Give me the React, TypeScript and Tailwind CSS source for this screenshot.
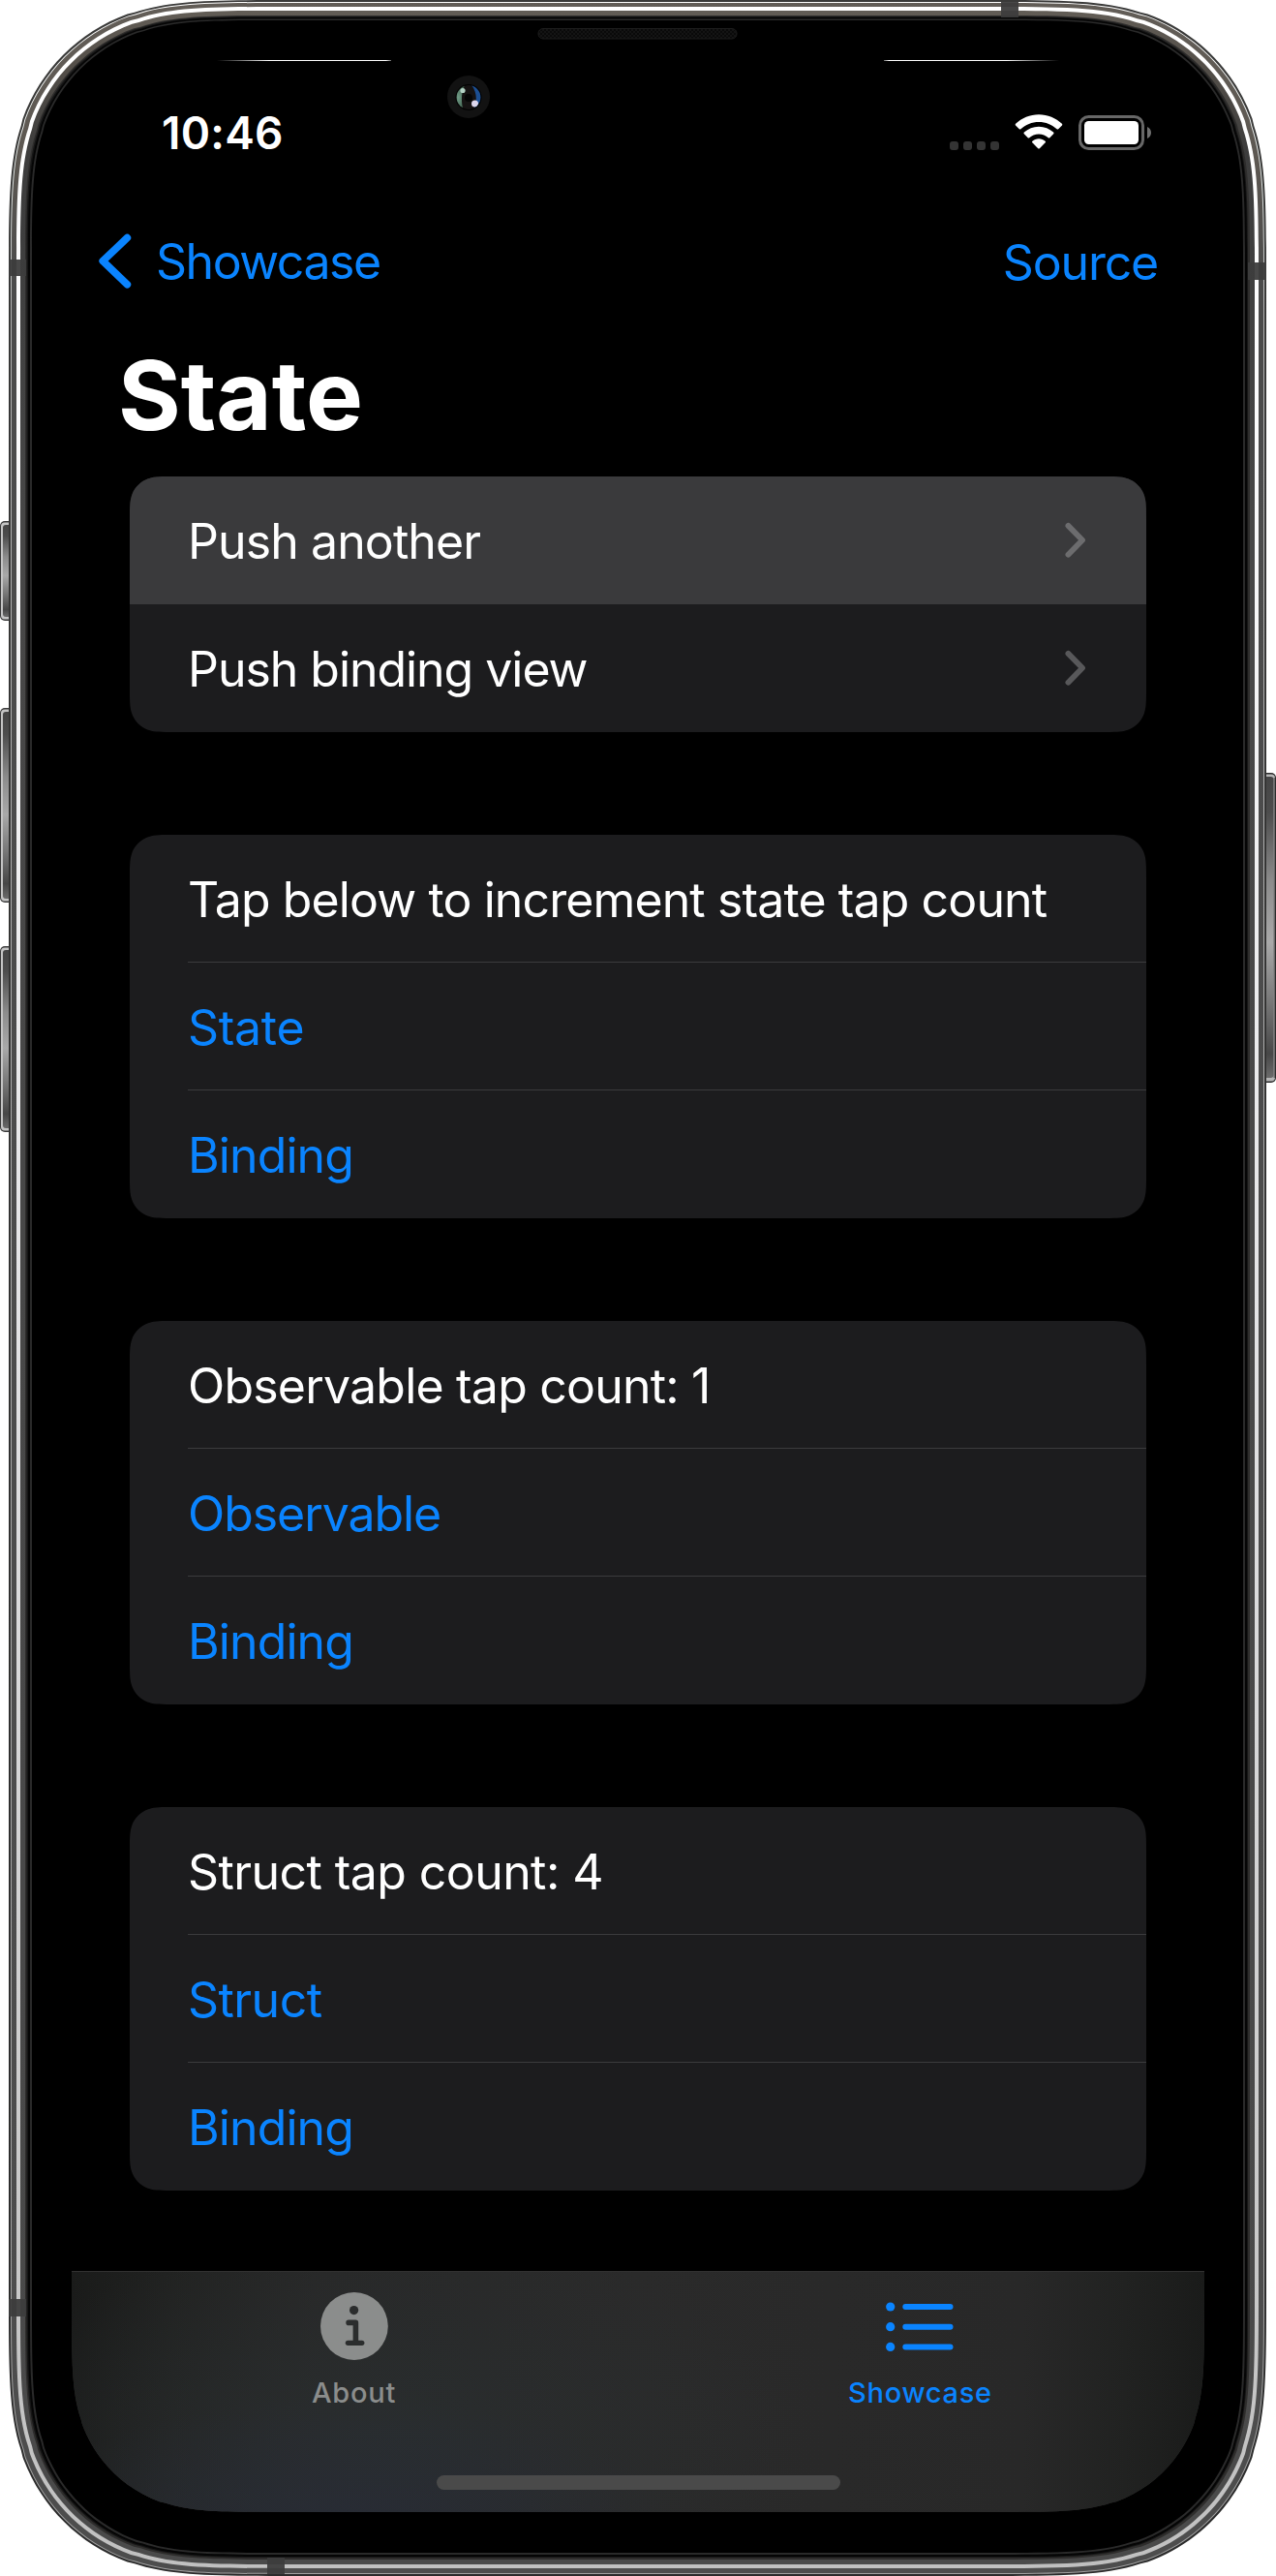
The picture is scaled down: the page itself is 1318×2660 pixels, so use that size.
import type { ReactNode } from "react";

/** Rounded rectangle with continuous-curvature corners, as an SVG path. */
function squircle(l: number, t: number, r: number, b: number, radius: number): string {
  const k = (f: number) => +(f * radius).toFixed(2);
  const a = k(1.52866);
  const c1 = k(1.08849);
  const c2 = k(0.86841);
  const p = k(0.66993);
  const q = k(0.06549);
  const u = k(0.63149);
  const v = k(0.07491);
  const m = k(0.37282);
  const n = k(0.16906);
  return [
    `M${l + a} ${t} L${r - a} ${t}`,
    `C${r - c1} ${t} ${r - c2} ${t} ${r - p} ${t + q} L${r - u} ${t + v}`,
    `C${r - m} ${t + n} ${r - n} ${t + m} ${r - v} ${t + u} L${r - q} ${t + p}`,
    `C${r} ${t + c2} ${r} ${t + c1} ${r} ${t + a} L${r} ${b - a}`,
    `C${r} ${b - c1} ${r} ${b - c2} ${r - q} ${b - p} L${r - v} ${b - u}`,
    `C${r - n} ${b - m} ${r - m} ${b - n} ${r - u} ${b - v} L${r - p} ${b - q}`,
    `C${r - c2} ${b} ${r - c1} ${b} ${r - a} ${b} L${l + a} ${b}`,
    `C${l + c1} ${b} ${l + c2} ${b} ${l + p} ${b - q} L${l + u} ${b - v}`,
    `C${l + m} ${b - n} ${l + n} ${b - m} ${l + v} ${b - u} L${l + q} ${b - p}`,
    `C${l} ${b - c2} ${l} ${b - c1} ${l} ${b - a} L${l} ${t + a}`,
    `C${l} ${t + c1} ${l} ${t + c2} ${l + q} ${t + p} L${l + v} ${t + u}`,
    `C${l + n} ${t + m} ${l + m} ${t + n} ${l + u} ${t + v} L${l + p} ${t + q}`,
    `C${l + c2} ${t} ${l + c1} ${t} ${l + a} ${t} Z`,
  ].join(" ");
}

function SideButton({ y, h, right = false }: { y: number; h: number; right?: boolean }) {
  return right ? (
    <g>
      <rect x="1300" y={y} width="18" height={h} rx="5" fill="#2b2b2b" />
      <rect x="1300" y={y + 1.5} width="17" height={h - 3} rx="4" fill="#b5b5b5" />
      <rect x="1300" y={y + 4} width="15.5" height={h - 9} rx="3" fill="url(#button)" />
      <rect x="1315.5" y={y + 5} width="1.5" height={h - 10} fill="#6a6a6a" />
    </g>
  ) : (
    <g>
      <rect x="0" y={y} width="18" height={h} rx="5" fill="#3a3a3a" />
      <rect x="1" y={y + 1.5} width="17" height={h - 3} rx="4" fill="#c4c4c4" />
      <rect x="3" y={y + 4} width="15" height={h - 8} rx="3" fill="url(#button)" />
    </g>
  );
}

function Bezel() {
  return (
    <svg className="absolute inset-0" width="1318" height="2660" viewBox="0 0 1318 2660" aria-hidden="true">
      <defs>
        <linearGradient id="edge" gradientUnits="userSpaceOnUse" x1="0" y1="0" x2="0" y2="2660">
          <stop offset="0" stopColor="#3a3a39" />
          <stop offset="1" stopColor="#2b2b2b" />
        </linearGradient>
        <linearGradient id="rim" gradientUnits="userSpaceOnUse" x1="0" y1="0" x2="0" y2="2660">
          <stop offset="0" stopColor="#ffffff" />
          <stop offset="0.07" stopColor="#e0e6e4" />
          <stop offset="0.12" stopColor="#b4b4b4" />
          <stop offset="1" stopColor="#a0a0a0" />
        </linearGradient>
        <linearGradient id="steel" gradientUnits="userSpaceOnUse" x1="0" y1="0" x2="0" y2="2660">
          <stop offset="0" stopColor="#625d57" />
          <stop offset="0.06" stopColor="#5d5852" />
          <stop offset="0.11" stopColor="#4b4b4b" />
          <stop offset="1" stopColor="#4d4d4d" />
        </linearGradient>
        <linearGradient id="inner" gradientUnits="userSpaceOnUse" x1="0" y1="0" x2="0" y2="2660">
          <stop offset="0" stopColor="#645f58" />
          <stop offset="0.025" stopColor="#544f49" />
          <stop offset="0.06" stopColor="#3c3c3c" />
          <stop offset="0.2" stopColor="#474747" />
          <stop offset="1" stopColor="#4a4a4a" />
        </linearGradient>
        <linearGradient id="gleam" gradientUnits="userSpaceOnUse" x1="0" y1="0" x2="0" y2="2660">
          <stop offset="0" stopColor="#ffffff" />
          <stop offset="0.16" stopColor="#fbfbfc" />
          <stop offset="0.5" stopColor="#e4e4e6" />
          <stop offset="0.85" stopColor="#cacaca" />
          <stop offset="1" stopColor="#c0c0c0" />
        </linearGradient>
        <linearGradient id="button" x1="0" y1="0" x2="0" y2="1">
          <stop offset="0" stopColor="#454545" />
          <stop offset="0.12" stopColor="#4d4d4d" />
          <stop offset="0.35" stopColor="#8c8c8c" />
          <stop offset="0.55" stopColor="#a9a9a9" />
          <stop offset="0.75" stopColor="#777777" />
          <stop offset="0.92" stopColor="#474747" />
          <stop offset="1" stopColor="#6b6b6b" />
        </linearGradient>
        <linearGradient id="glintLeft" x1="0" x2="1" y1="0" y2="0">
          <stop offset="0" stopColor="#fff" stopOpacity="0" />
          <stop offset="0.3" stopColor="#fff" />
          <stop offset="0.97" stopColor="#fff" />
          <stop offset="1" stopColor="#fff" stopOpacity="0.4" />
        </linearGradient>
        <linearGradient id="glintRight" x1="1" x2="0" y1="0" y2="0">
          <stop offset="0" stopColor="#fff" stopOpacity="0" />
          <stop offset="0.3" stopColor="#fff" />
          <stop offset="0.97" stopColor="#fff" />
          <stop offset="1" stopColor="#fff" stopOpacity="0.4" />
        </linearGradient>
        <pattern id="mesh" width="4" height="4" patternUnits="userSpaceOnUse">
          <rect width="4" height="4" fill="#141414" />
          <rect width="2" height="2" fill="#0a0a0a" />
          <rect x="2" y="2" width="2" height="2" fill="#0a0a0a" />
        </pattern>
        <radialGradient id="lensGreen">
          <stop offset="0" stopColor="#6f9a85" />
          <stop offset="1" stopColor="#3f5f4d" />
        </radialGradient>
        <clipPath id="lens">
          <circle cx="484" cy="100.5" r="12.4" />
        </clipPath>
      </defs>

      <SideButton y={538} h={103} />
      <SideButton y={731} h={201} />
      <SideButton y={977} h={192} />
      <SideButton y={798} h={320} right />

      <path d={squircle(9, 0, 1308, 2660, 194)} fill="url(#edge)" />
      <path d={squircle(11, 2, 1306, 2658, 192)} fill="url(#rim)" />
      <path d={squircle(12, 3, 1305, 2657, 191)} fill="url(#steel)" />
      <path d={squircle(17, 7, 1300, 2652, 187)} fill="url(#gleam)" />
      <path d={squircle(21, 11, 1296, 2648, 183)} fill="url(#inner)" />
      <path d={squircle(26, 16, 1291, 2643, 178)} fill="#2e2d2c" />
      <path d={squircle(27.5, 17, 1289, 2641, 177)} fill="#161616" />
      <path d={squircle(29, 18, 1288, 2640, 176)} fill="#050505" />
      <path d={squircle(31, 19.5, 1286, 2638, 174)} fill="#2a2a2a" />
      <path d={squircle(33, 21, 1284, 2636, 172)} fill="#000" />

      <g fill="#3d3d3d" fillOpacity="0.94">
        <rect x="9" y="268" width="18" height="17" />
        <rect x="9" y="2374" width="18" height="18" />
        <rect x="1289" y="271" width="19" height="18" />
        <rect x="1034" y="2" width="18" height="16" />
        <rect x="276" y="2641" width="18" height="17" />
      </g>

      <rect x="224" y="62" width="180" height="1" fill="url(#glintLeft)" />
      <rect x="913" y="62" width="181" height="1" fill="url(#glintRight)" />

      <rect x="556" y="29.5" width="205" height="10.5" rx="5" fill="url(#mesh)" stroke="#1d1d1d" />
      <circle cx="484" cy="100" r="22" fill="#121212" />
      <circle cx="484" cy="100.5" r="13.5" fill="#020202" />
      <g clipPath="url(#lens)">
        <circle cx="484" cy="100.5" r="12.6" fill="#151212" />
        <path d="M481 86 C476 95 476 106 479 115 L466 115 L466 86 Z" fill="url(#lensGreen)" />
        <path d="M487 88 C493 95 493 105 489 114 L500 114 L500 86 Z" fill="#1c4f93" />
        <circle cx="484" cy="101" r="4" fill="#050505" />
        <circle cx="478" cy="93.5" r="2.6" fill="#b4d2c4" />
        <circle cx="490.5" cy="107" r="3.5" fill="#dcd6ec" />
      </g>
    </svg>
  );
}

function StatusBar() {
  return (
    <div className="flex h-[90px] items-center pl-[93px] pr-[55px] text-white">
      <span className="text-[46px] font-semibold leading-[56px] tracking-[0.23px]">10:46</span>
      <div className="ml-auto flex h-[37px] items-center">
        <div className="flex gap-[5px] self-end pb-px">
          <i className="size-[9px] rounded-[3px] bg-[#343434]" />
          <i className="size-[9px] rounded-[3px] bg-[#343434]" />
          <i className="size-[9px] rounded-[3px] bg-[#343434]" />
          <i className="size-[9px] rounded-[3px] bg-[#343434]" />
        </div>
        <svg className="ml-4 mb-0.5" width="50" height="36" viewBox="0 0 50 36" fill="#fff">
          <path d="M25 0.3 C34.2 0.3 42.6 3.9 48.9 9.8 C49.4 10.3 49.4 11 49 11.5 L45.2 15.3 C44.8 15.7 44.1 15.7 43.6 15.3 C38.7 10.7 32.1 8 25 8 C17.9 8 11.3 10.7 6.4 15.3 C5.9 15.7 5.2 15.7 4.8 15.3 L1 11.5 C0.6 11 0.6 10.3 1.1 9.8 C7.4 3.9 15.8 0.3 25 0.3 Z" />
          <path d="M25 12.8 C30.8 12.8 36.1 15 40.1 18.6 C40.7 19.1 40.7 19.8 40.2 20.3 L36.3 24.2 C35.9 24.6 35.3 24.6 34.8 24.2 C32.2 21.9 28.8 20.5 25 20.5 C21.2 20.5 17.8 21.9 15.2 24.2 C14.7 24.6 14.1 24.6 13.7 24.2 L9.8 20.3 C9.3 19.8 9.3 19.1 9.9 18.6 C13.9 15 19.2 12.8 25 12.8 Z" />
          <path d="M25 25.3 C27.5 25.3 29.8 26.2 31.6 27.7 C32.2 28.2 32.2 28.8 31.7 29.3 L25.8 35.2 C25.3 35.7 24.7 35.7 24.2 35.2 L18.3 29.3 C17.8 28.8 17.8 28.2 18.4 27.7 C20.2 26.2 22.5 25.3 25 25.3 Z" />
        </svg>
        <svg className="ml-4" width="75" height="36" viewBox="0 0 75 36">
          <rect x="1.5" y="1.5" width="65" height="33" rx="9" fill="none" stroke="#676767" strokeWidth="3" />
          <rect x="6" y="6" width="56" height="24" rx="4.5" fill="#fff" />
          <path d="M71 12 C73.4 13 75 15.3 75 18 C75 20.7 73.4 23 71 24 Z" fill="#6f6f6f" />
        </svg>
      </div>
    </div>
  );
}

function NavBar() {
  return (
    <div className="mt-[22px] flex h-[132px] items-center pl-7 pr-12 text-[50px] leading-[60px] text-[#0a84ff]">
      <svg width="34" height="58" viewBox="0 0 34 58" fill="none" stroke="currentColor" strokeWidth="7.6" strokeLinecap="round" strokeLinejoin="round">
        <path d="M29.4 4.6 L4.2 28.6 L29.4 52.8" />
      </svg>
      <span className="ml-[25px] tracking-[-1.47px]">Showcase</span>
      <span className="ml-auto pt-0.5 tracking-[-1.2px]">Source</span>
    </div>
  );
}

function Chevron({ pressed = false }: { pressed?: boolean }) {
  return (
    <svg className={pressed ? "text-[#6c6c6e]" : "text-[#58585a]"} width="22" height="38" viewBox="0 0 22 38" fill="none" stroke="currentColor" strokeWidth="5.8" strokeLinecap="round" strokeLinejoin="round">
      <path d="M3.4 3.9 L18 18.8 L3.4 33.7" />
    </svg>
  );
}

function Card({ rows, children }: { rows: number; children: ReactNode }) {
  return (
    <div
      className="flex flex-col bg-[#1c1c1e]"
      style={{ clipPath: `path("${squircle(0, 0, 1050, rows * 132, 30)}")` }}
    >
      {children}
    </div>
  );
}

type RowProps = { children: ReactNode; tracking: string; link?: boolean; last?: boolean };

function Row({ children, tracking, link = false, last = false }: RowProps) {
  return (
    <div className="flex h-[132px] pl-[60px] text-[50px] leading-[60px]">
      <div
        className={`flex flex-1 items-center pt-[3px] ${last ? "pb-px" : "border-b border-[#3b3b3d]"} ${link ? "text-[#0a84ff]" : "text-white"}`}
      >
        <span className={tracking}>{children}</span>
      </div>
    </div>
  );
}

function PushRow({ children, tracking, pressed = false }: { children: ReactNode; tracking: string; pressed?: boolean }) {
  return (
    <div
      className={`flex h-[132px] items-center justify-between pl-[60px] pr-[62px] text-[50px] leading-[60px] text-white ${pressed ? "bg-[#3a3a3c]" : ""}`}
    >
      <span className={`pt-0.5 ${tracking}`}>{children}</span>
      <Chevron pressed={pressed} />
    </div>
  );
}

function InfoIcon() {
  return (
    <svg className="-ml-0.5" width="70" height="70" viewBox="0 0 70 70" fill="none">
      <circle cx="34.9" cy="35" r="34.9" fill="#8b8d8c" />
      <circle cx="34.6" cy="18.6" r="4.6" fill="#2b2d2d" />
      <path d="M29.1 31.4 H36.4 V52.3" stroke="#2b2d2d" strokeWidth="5.6" strokeLinecap="round" strokeLinejoin="round" />
      <path d="M28.4 52.3 H42.8" stroke="#2b2d2d" strokeWidth="5.2" strokeLinecap="round" />
    </svg>
  );
}

function ListIcon() {
  return (
    <svg className="-ml-[3px]" width="70" height="70" viewBox="0 0 70 70" fill="#0a84ff">
      <circle cx="4.7" cy="15" r="4.6" />
      <circle cx="4.7" cy="35.7" r="4.6" />
      <circle cx="4.7" cy="56.4" r="4.6" />
      <rect x="17.3" y="12" width="52.2" height="6" rx="3" />
      <rect x="17.3" y="32.7" width="52.2" height="6" rx="3" />
      <rect x="17.3" y="53.4" width="52.2" height="6" rx="3" />
    </svg>
  );
}

function TabBar() {
  return (
    <div
      className="mt-[83px] flex h-[249px] flex-col border-t border-[#313131] bg-[#282828] bg-[radial-gradient(ellipse_340px_130px_at_24%_105%,#282c35_0%,#282c3500_100%),radial-gradient(ellipse_420px_220px_at_28%_70%,#292d2e_0%,#292d2e00_100%),linear-gradient(to_right,#1a1b1a_0%,#212221_9%,#282828_22%,#2a2a2a_50%,#282828_84%,#212221_93%,#1a1b1a_100%)]"
      style={{ clipPath: `path("${squircle(0, -400, 1170, 249, 144)}")` }}
    >
      <div className="flex text-[29px] font-medium leading-[35px]">
        <div className="flex flex-1 flex-col items-center pt-[21px] text-[#8b8d8c]">
          <InfoIcon />
          <span className="mt-4 -ml-0.5 tracking-[0.75px]">About</span>
        </div>
        <div className="flex flex-1 flex-col items-center pt-[21px] text-[#0a84ff]">
          <ListIcon />
          <span className="mt-4 -ml-0.5 tracking-[0.73px]">Showcase</span>
        </div>
      </div>
      <div className="mx-auto mt-auto mb-[23px] h-[15px] w-[417px] rounded-full bg-[#4a4a4a]" />
    </div>
  );
}

export default function App() {
  return (
    <div className="relative h-[2660px] w-[1318px] overflow-hidden bg-white font-[Inter,sans-serif]">
      <Bezel />
      <main className="relative mx-[74px] flex flex-col pt-[92px]">
        <StatusBar />
        <NavBar />
        <h1 className="flex h-[144px] items-center pl-12 text-[99px] font-bold leading-[120px] tracking-[-0.1px] text-white">State</h1>

        <div className="mt-3 flex flex-col gap-[106px] px-[60px]">
          <Card rows={2}>
            <PushRow pressed tracking="tracking-[-0.9px]">Push another</PushRow>
            <PushRow tracking="tracking-[-1.04px]">Push binding view</PushRow>
          </Card>
          <Card rows={3}>
            <Row tracking="tracking-[-0.89px]">Tap below to increment state tap count</Row>
            <Row link tracking="tracking-[-0.3px]">State</Row>
            <Row link last tracking="tracking-[-0.9px]">Binding</Row>
          </Card>
          <Card rows={3}>
            <Row tracking="tracking-[-0.8px]">Observable tap count: 1</Row>
            <Row link tracking="tracking-[-1.06px]">Observable</Row>
            <Row link last tracking="tracking-[-0.9px]">Binding</Row>
          </Card>
          <Card rows={3}>
            <Row tracking="tracking-[-0.58px]">Struct tap count: 4</Row>
            <Row link tracking="tracking-[-0.55px]">Struct</Row>
            <Row link last tracking="tracking-[-0.9px]">Binding</Row>
          </Card>
        </div>

        <TabBar />
      </main>
    </div>
  );
}
